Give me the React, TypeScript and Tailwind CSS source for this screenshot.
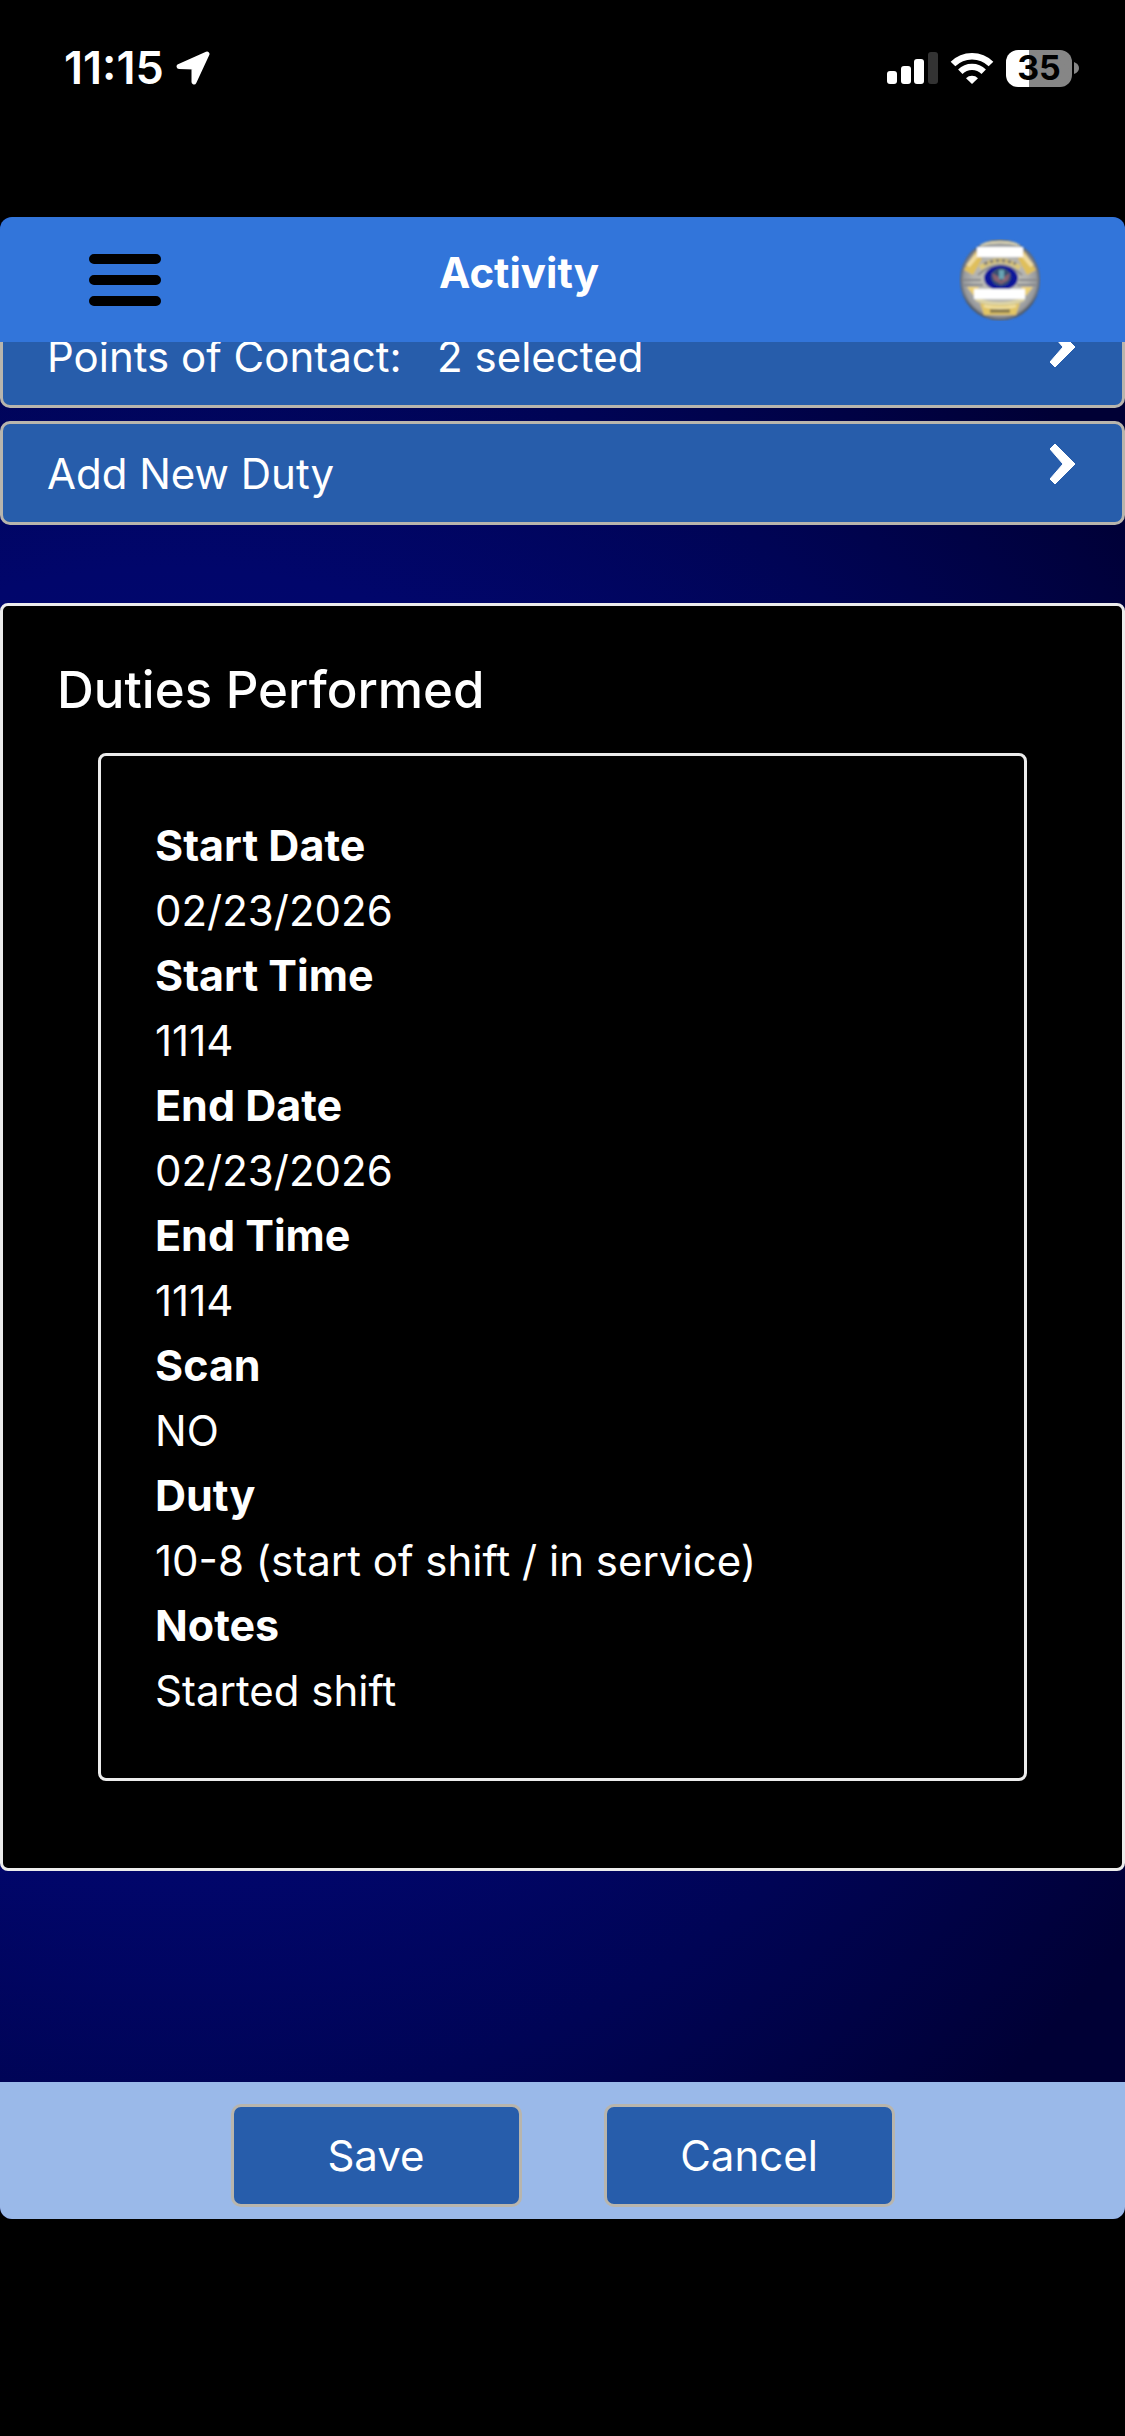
import React from 'react';

const duty = [
  { label: 'Start Date', value: '02/23/2026' },
  { label: 'Start Time', value: '1114' },
  { label: 'End Date', value: '02/23/2026' },
  { label: 'End Time', value: '1114' },
  { label: 'Scan', value: 'NO' },
  { label: 'Duty', value: '10-8 (start of shift / in service)' },
  { label: 'Notes', value: 'Started shift' },
];

function StatusBar() {
  return (
    <div className="flex h-[217px] shrink-0 items-start justify-between pt-[42px] pr-[46px] pl-[64px]">
      <div className="flex items-center gap-3">
        <span className="text-[45px] leading-[52px] font-semibold">11:15</span>
        <svg className="h-[34px] w-[34px]" viewBox="0 0 34 34" fill="#fff" aria-hidden="true">
          <path
            d="M3 15.5 31 3 18 31V16Z"
            stroke="#fff"
            strokeWidth="5"
            strokeLinejoin="round"
          />
        </svg>
      </div>
      <div className="flex h-[52px] items-center gap-3">
        <svg className="h-8 w-[51px]" viewBox="0 0 51 32" fill="#fff" aria-hidden="true">
          <rect x="0" y="19" width="10" height="13" rx="3" />
          <rect x="14" y="14" width="10" height="18" rx="3" />
          <rect x="27" y="7" width="10" height="25" rx="3" />
          <rect x="41" y="0" width="10" height="32" rx="3" fill="#333" />
        </svg>
        <svg className="h-8 w-11" viewBox="0 0 44 32" fill="none" stroke="#fff" aria-hidden="true">
          <path d="M3 12A27 27 0 0 1 41 12" strokeWidth="6.6" />
          <path d="M10.3 19.7A16.5 16.5 0 0 1 33.7 19.7" strokeWidth="6.2" />
          <path d="M22 32 16 26.3A8.5 8.5 0 0 1 28 26.3Z" fill="#fff" stroke="none" />
        </svg>
        <div className="flex items-center gap-[2px]">
          <div className="flex h-[37px] w-[66px] items-center justify-center rounded-xl bg-linear-to-r from-white from-35% to-[#868686] to-35% text-[34px] leading-none font-bold text-black">
            35
          </div>
          <svg className="h-3 w-[5px]" viewBox="0 0 5 12" fill="#868686" aria-hidden="true">
            <path d="M0 0Q5 2 5 6T0 12Z" />
          </svg>
        </div>
      </div>
    </div>
  );
}

function Badge() {
  return (
    <svg className="size-[82px]" viewBox="0 0 82 82" aria-hidden="true">
      <defs>
        <clipPath id="shield">
          <ellipse cx="41" cy="41" rx="40" ry="40.5" />
        </clipPath>
        <radialGradient id="steel">
          <stop offset="0" stopColor="#c9c8bd" />
          <stop offset="0.65" stopColor="#b3b3b0" />
          <stop offset="0.88" stopColor="#989a9d" />
          <stop offset="1" stopColor="#4b5260" />
        </radialGradient>
        <filter id="soft">
          <feGaussianBlur stdDeviation="0.8" />
        </filter>
      </defs>
      <g filter="url(#soft)">
        <g clipPath="url(#shield)">
          <rect width="82" height="82" fill="url(#steel)" />
          <path d="M27 2Q41-2 55 2" fill="none" stroke="#3f4348" strokeWidth="3" />
          <path d="M21 6Q41 0 61 6" fill="none" stroke="#d4cfb4" strokeWidth="3" />
          <path d="M5 31 17 12 23 20 14 36Z" fill="#dfbf5c" />
          <path d="M77 31 65 12 59 20 68 36Z" fill="#dfbf5c" />
          <path d="M9 27 18 16M73 27 64 16" stroke="#f0dca0" strokeWidth="4" />
          <path d="M21 29Q41 14 61 29" fill="none" stroke="#ddc878" strokeWidth="5" />
          <path d="M25 25Q41 18 57 25" fill="none" stroke="#858078" strokeWidth="3" strokeDasharray="4 2" />
          <path d="M19 36Q41 16 63 36" fill="none" stroke="#8b8a88" strokeWidth="2" />
          <path d="M3 41H22M79 41H60M5 46H24M77 46H58" stroke="#85878c" strokeWidth="2" />
          <path d="M8 48H20L15 57Z" fill="#eed276" />
          <path d="M74 48H62L67 57Z" fill="#eed276" />
          <path d="M17 60Q41 70 65 60" fill="none" stroke="#ddd4a6" strokeWidth="4" />
          <path d="M3 57Q12 72 26 79M79 57Q70 72 56 79" fill="none" stroke="#4d5661" strokeWidth="3" />
          <path d="M21 64Q41 69 61 64L57 76H25Z" fill="#e2c565" />
          <path d="M25 67Q41 71 57 67" fill="none" stroke="#f5e6ac" strokeWidth="2" />
          <path d="M31 72H51" stroke="#8e8051" strokeWidth="4" />
        </g>
        <ellipse cx="42" cy="39" rx="17" ry="12.5" fill="#10139a" />
        <ellipse cx="42" cy="38" rx="10" ry="9" fill="#385071" />
        <path d="M33 34 40 38 42 43 45 38 51 34 49 41 42 45 35 41Z" fill="#8c6472" />
        <path d="M40 31H45V40H40Z" fill="#68a3b3" />
        <path d="M18 8H64V18H18Z" fill="#fff" />
        <path d="M15 50H66V60H15Z" fill="#fff" />
      </g>
    </svg>
  );
}

function Chevron() {
  return (
    <svg className="mb-[18px] h-10 w-[25px]" viewBox="0 0 25 40" aria-hidden="true">
      <path d="M5 0 25 20 5 40 0 35 13 20 0 5Z" fill="#fff" stroke="#fff" strokeWidth="1" strokeLinejoin="round" />
    </svg>
  );
}

function MenuRow({ children }: { children: React.ReactNode }) {
  return (
    <button
      type="button"
      className="flex h-[104px] w-full items-center justify-between rounded-[10px] border-[3px] border-[#b8b5ad] bg-[#275dab] pr-[47px] pl-[44px] text-left"
    >
      <span className="whitespace-pre">{children}</span>
      <Chevron />
    </button>
  );
}

export default function App() {
  return (
    <div className="flex min-h-screen flex-col bg-black font-['Inter','Liberation_Sans',sans-serif] text-[42px] leading-[65px] text-white">
      <StatusBar />

      <div className="flex flex-col overflow-hidden rounded-xl bg-[radial-gradient(circle_at_15%_50%,#00087a,#01066b_650px,#000455_900px,#000035_1200px)]">
        <header className="relative z-10 flex h-[125px] items-center justify-between bg-[#3275da] pr-[84px] pl-[89px]">
          <button type="button" aria-label="Menu">
            <svg className="h-[52px] w-[72px]" viewBox="0 0 72 52" aria-hidden="true">
              <path d="M5 5H67M5 26H67M5 47H67" stroke="#000" strokeWidth="10" strokeLinecap="round" />
            </svg>
          </button>
          <h1 className="pr-[82px] pb-[14px] font-bold">Activity</h1>
          <Badge />
        </header>

        <main className="-mt-[38px] flex flex-col">
          <div className="flex flex-col gap-[13px]">
            <MenuRow>Points of Contact:   2 selected</MenuRow>
            <MenuRow>Add New Duty</MenuRow>
          </div>

          <section className="mt-[78px] rounded-lg border-[3px] border-[#ececec] bg-black px-[54px] pt-[50px] pb-[87px]">
            <h2 className="text-[51px] leading-[68px] font-medium">Duties Performed</h2>
            <dl className="mx-[41px] mt-[29px] rounded-lg border-[3px] border-[#ececec] px-[54px] pt-[57px] pb-[55px]">
              {duty.map(({ label, value }) => (
                <div key={label}>
                  <dt className="text-[43px] font-bold">{label}</dt>
                  <dd>{value}</dd>
                </div>
              ))}
            </dl>
          </section>
        </main>

        <footer className="mt-[211px] flex justify-center gap-[82px] bg-[#9ab9e9] pt-[22px] pb-3">
          <button type="button" className="h-[103px] w-[291px] rounded-[10px] border-[3px] border-[#b8b5ad] bg-[#275dab]">
            Save
          </button>
          <button type="button" className="h-[103px] w-[291px] rounded-[10px] border-[3px] border-[#b8b5ad] bg-[#275dab]">
            Cancel
          </button>
        </footer>
      </div>
    </div>
  );
}
